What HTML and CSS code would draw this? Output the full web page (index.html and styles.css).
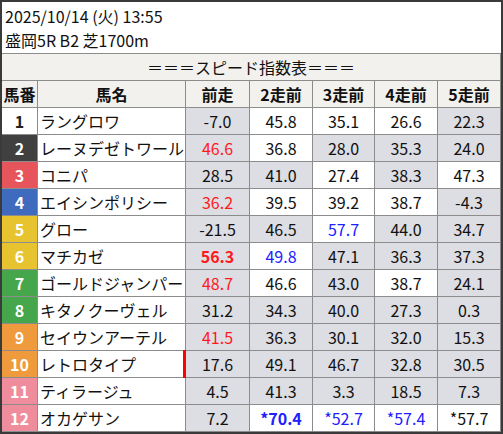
FILE: index.html
```html
<!DOCTYPE html>
<html lang="ja">
<head>
<meta charset="utf-8">
<link rel="stylesheet" href="styles.css">
</head>
<body>
<div class="sheet">
  <div class="info">
    <div>2025/10/14 (火) 13:55</div>
    <div>盛岡5R B2 芝1700m</div>
  </div>
  <div class="grid">
    <div class="title">＝＝＝スピード指数表＝＝＝</div>
    <div class="hd">馬番</div><div class="hd">馬名</div><div class="hd">前走</div><div class="hd">2走前</div><div class="hd">3走前</div><div class="hd">4走前</div><div class="hd">5走前</div>

    <div class="no w1">1</div><div class="nm">ラングロワ</div><div class="v g">-7.0</div><div class="v">45.8</div><div class="v">35.1</div><div class="v">26.6</div><div class="v g">22.3</div>
    <div class="no w2">2</div><div class="nm">レーヌデゼトワール</div><div class="v g red">46.6</div><div class="v">36.8</div><div class="v g">28.0</div><div class="v g">35.3</div><div class="v g">24.0</div>
    <div class="no w3">3</div><div class="nm">コニパ</div><div class="v g">28.5</div><div class="v g">41.0</div><div class="v">27.4</div><div class="v g">38.3</div><div class="v">47.3</div>
    <div class="no w4">4</div><div class="nm">エイシンポリシー</div><div class="v g red">36.2</div><div class="v">39.5</div><div class="v">39.2</div><div class="v">38.7</div><div class="v g">-4.3</div>
    <div class="no w5">5</div><div class="nm">グロー</div><div class="v g">-21.5</div><div class="v g">46.5</div><div class="v blue">57.7</div><div class="v g">44.0</div><div class="v g">34.7</div>
    <div class="no w5">6</div><div class="nm">マチカゼ</div><div class="v g red b">56.3</div><div class="v blue">49.8</div><div class="v g">47.1</div><div class="v g">36.3</div><div class="v g">37.3</div>
    <div class="no w6">7</div><div class="nm">ゴールドジャンパー</div><div class="v g red">48.7</div><div class="v">46.6</div><div class="v g">43.0</div><div class="v">38.7</div><div class="v g">24.1</div>
    <div class="no w6">8</div><div class="nm">キタノクーヴェル</div><div class="v g">31.2</div><div class="v g">34.3</div><div class="v g">40.0</div><div class="v g">27.3</div><div class="v g">0.3</div>
    <div class="no w7">9</div><div class="nm">セイウンアーテル</div><div class="v g red">41.5</div><div class="v g">36.3</div><div class="v g">30.1</div><div class="v g">32.0</div><div class="v g">15.3</div>
    <div class="no w7">10</div><div class="nm mark">レトロタイプ</div><div class="v g">17.6</div><div class="v g">49.1</div><div class="v g">46.7</div><div class="v g">32.8</div><div class="v g">30.5</div>
    <div class="no w8">11</div><div class="nm">ティラージュ</div><div class="v g">4.5</div><div class="v g">41.3</div><div class="v g">3.3</div><div class="v g">18.5</div><div class="v g">7.3</div>
    <div class="no w8">12</div><div class="nm">オカゲサン</div><div class="v g">7.2</div><div class="v blue b">*70.4</div><div class="v blue">*52.7</div><div class="v blue">*57.4</div><div class="v">*57.7</div>
  </div>
</div>
</body>
</html>
```

FILE: styles.css
```css
html, body {
  margin: 0;
  padding: 0;
  background: #ffffff;
}
body {
  font-family: "Noto Sans CJK JP", "Noto Sans", sans-serif;
  font-size: 16px;
  color: #111;
}
.sheet {
  width: 503px;
  height: 434px;
  box-sizing: border-box;
  border: 2px solid #3a3a3a;
  background: #ffffff;
  overflow: hidden;
}
.info {
  height: 51px;
  box-sizing: border-box;
  padding: 2px 0 0 3px;
  line-height: 24px;
  background: #ffffff;
}
.grid {
  display: grid;
  grid-template-columns: 35px 147px 63px 62px 61px 62px 62px;
  grid-auto-rows: 26px;
  gap: 1px;
  padding: 1px 1px 1px 0;
  background: #8c8c8c;
}
.grid > div {
  line-height: 26px;
  white-space: nowrap;
  overflow: hidden;
  background: #ffffff;
}
.grid > .title {
  grid-column: 1 / -1;
  text-align: center;
  background: #f2f1ed;
}
.grid > .hd {
  background: #f2f1ed;
  font-weight: bold;
  text-align: center;
}
.grid > .no {
  text-align: center;
  font-weight: bold;
  color: #ffffff;
}
.grid > .w1 { background: #ffffff; color: #222; }
.grid > .w2 { background: #404040; }
.grid > .w3 { background: #e5555b; }
.grid > .w4 { background: #3e6bbd; }
.grid > .w5 { background: #e6c32f; }
.grid > .w6 { background: #45a64b; }
.grid > .w7 { background: #ef9a3c; }
.grid > .w8 { background: #ef8d9d; }
.grid > .nm {
  padding-left: 2px;
}
.grid > .mark {
  position: relative;
  overflow: visible;
}
.grid > .mark::after {
  content: "";
  position: absolute;
  top: -1px;
  bottom: -1px;
  right: -1px;
  width: 3px;
  background: #ff0000;
}
.grid > .v {
  text-align: center;
}
.grid > .g {
  background: #dddde4;
}
.red { color: #ff1a1a; }
.blue { color: #2020ff; }
.b { font-weight: bold; }
```
